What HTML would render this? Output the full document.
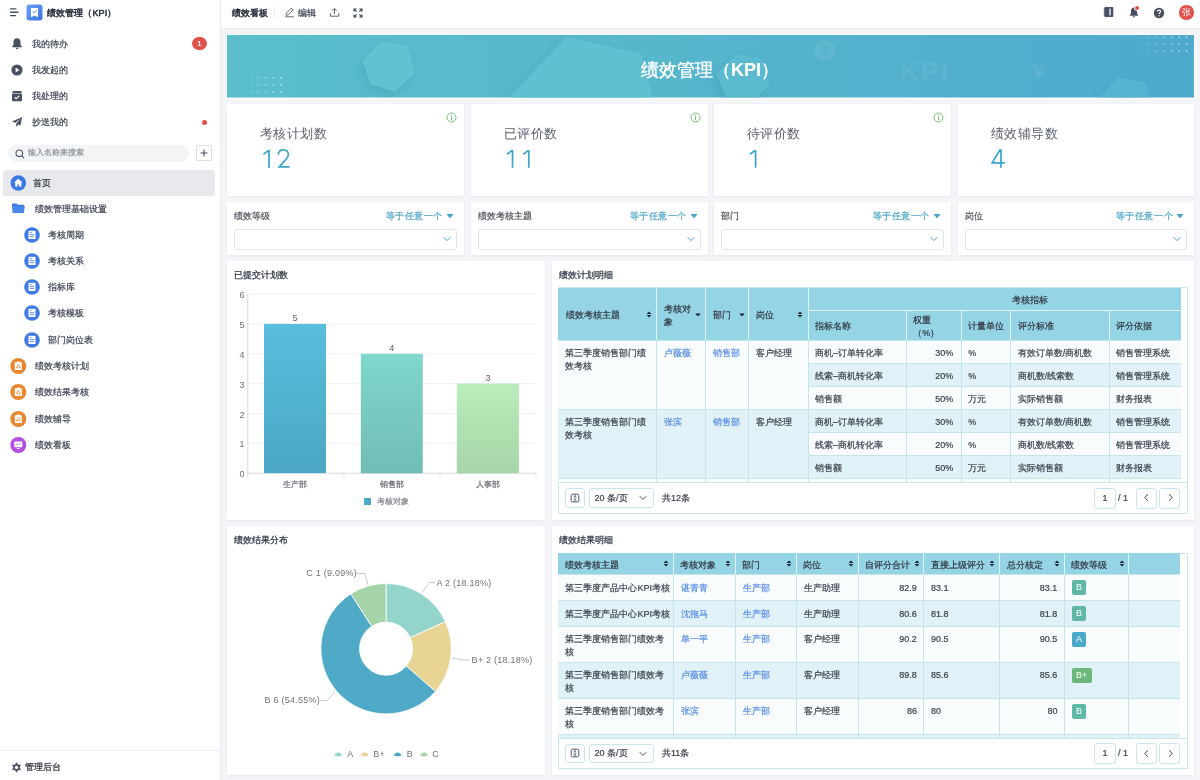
<!DOCTYPE html><html><head><meta charset="utf-8"><title>绩效看板</title><style>
*{box-sizing:border-box;margin:0;padding:0}
html,body{width:1200px;height:780px;overflow:hidden;background:#f3f5f8;font-family:"Liberation Sans",sans-serif;color:#323a46}
#wrap{position:absolute;left:0;top:0;width:1200px;height:780px;will-change:transform;-webkit-text-stroke-width:.2px}
.a{position:absolute}
.nw{white-space:nowrap}
.side{left:0;top:0;width:221px;height:780px;background:#fff;border-right:1px solid #e7e9ec}
.mi{position:absolute;font-size:9px;line-height:12px;color:#3a4150;white-space:nowrap}
.top{left:221px;top:0;width:979px;height:28.5px;background:#fff;border-bottom:1px solid #eceef1}
.card{position:absolute;background:#fff;border-radius:1px;box-shadow:0 1px 3px rgba(30,40,70,.06)}
.stat-l{position:absolute;font-size:13px;line-height:14px;color:#5b606b;letter-spacing:.6px;white-space:nowrap;-webkit-text-stroke-width:0}
.stat-n{position:absolute;font-size:27px;line-height:28px;color:#5cb1d2;white-space:nowrap;-webkit-text-stroke-width:0}
.flab{position:absolute;font-size:9px;line-height:12px;color:#4b505a;white-space:nowrap}
.fop{position:absolute;font-size:9px;line-height:12px;color:#4aa4c9;letter-spacing:.6px;white-space:nowrap}
.finp{position:absolute;height:21px;border:1px solid #e1e4e8;border-radius:3px;background:#fff}
.ctitle{position:absolute;font-size:9px;line-height:12px;color:#3d4350;white-space:nowrap}
table{border-collapse:collapse;table-layout:fixed}
.tb{position:absolute;font-size:9px;color:#3b414c}
.tb th{background:#94d4e5;font-weight:400;color:#2f3540;text-align:left;border:1px solid #dff1f6;padding:0 7px;line-height:13px;position:relative}
.tb td{border:1px solid #c3e3ed;padding:5px 7px;line-height:13px;vertical-align:top}
.tb tr.o td{background:#f9fcfd}
.tb tr.e td{background:#e0f1f7}
.lk{color:#5a8de6}
.r{text-align:right}
.btn{position:absolute;border:1px solid #c9e6ef;border-radius:3px;background:#fff}
.badge{display:inline-block;height:15px;line-height:15px;padding:0 4px;border-radius:2px;color:#fff;font-size:9px;min-width:14.5px;text-align:center}
</style></head><body><div id="wrap">
<div class="a side">
<svg class="a" style="left:9px;top:7px" width="12" height="11" viewBox="0 0 12 11"><rect x="1" y="1.2" width="6.5" height="1.3" rx=".6" fill="#4a5061"/><rect x="1" y="4.6" width="8.6" height="1.3" rx=".6" fill="#4a5061"/><rect x="1" y="8" width="6.1" height="1.3" rx=".6" fill="#4a5061"/></svg>
<svg class="a" style="left:26px;top:4px" width="17" height="17" viewBox="0 0 17 17"><defs><linearGradient id="ag" x1="0" y1="0" x2="1" y2="1"><stop offset="0" stop-color="#6ea0f7"/><stop offset="1" stop-color="#3b73e4"/></linearGradient></defs><rect x=".5" y=".5" width="16" height="16" rx="3" fill="url(#ag)"/><path d="M5 4h7v9.2l-3.5-1.8L5 13.2z" fill="#fff"/><path d="M6.6 7.4l1.5 1.4 2.6-2.4" stroke="#5b8ff2" stroke-width="1" fill="none"/></svg>
<div class="mi" style="left:47px;top:6.5px;font-size:9px;color:#2d3340;letter-spacing:.1px;-webkit-text-stroke:.5px #2d3340">绩效管理（KPI）</div>
<div class="mi" style="left:32px;top:38px">我的待办</div>
<div class="mi" style="left:32px;top:64px">我发起的</div>
<div class="mi" style="left:32px;top:90px">我处理的</div>
<div class="mi" style="left:32px;top:116px">抄送我的</div>
<svg class="a" style="left:11px;top:37px" width="12" height="13" viewBox="0 0 12 13"><path d="M6 1.2c-2.2 0-3.5 1.7-3.5 3.7v2.8L1.2 9.6v.6h9.6v-.6L9.5 7.7V4.9C9.5 2.9 8.2 1.2 6 1.2z" fill="#4a5061"/><path d="M4.6 10.8h2.8a1.4 1.4 0 0 1-2.8 0z" fill="#4a5061"/></svg>
<svg class="a" style="left:11px;top:64px" width="12" height="12" viewBox="0 0 12 12"><circle cx="6" cy="6" r="5.6" fill="#4a5061"/><path d="M4.6 3.6l3.7 2.4-3.7 2.4z" fill="#fff"/></svg>
<svg class="a" style="left:11px;top:90px" width="12" height="12" viewBox="0 0 12 12"><rect x="1.5" y="1" width="9" height="2" rx=".5" fill="#4a5061"/><rect x="1" y="3.6" width="10" height="7.6" rx="1" fill="#4a5061"/><path d="M3.8 7.2l1.5 1.4 2.9-2.7" stroke="#fff" stroke-width="1.2" fill="none"/></svg>
<svg class="a" style="left:11px;top:116px" width="12" height="12" viewBox="0 0 12 12"><path d="M11.2 1L1 5.6l3.3 1.2L10 2.6 5.2 7.5 5.3 11l1.9-2.6 2.2 1z" fill="#4a5061"/></svg>
<div class="a" style="left:192px;top:37px;width:15px;height:13px;border-radius:7px;background:#e0514b;color:#fff;font-size:8px;line-height:13px;text-align:center">1</div>
<div class="a" style="left:202px;top:120px;width:5px;height:5px;border-radius:3px;background:#e0514b"></div>
<div class="a" style="left:8px;top:145px;width:181px;height:17px;border-radius:9px;background:#f3f4f6"></div>
<svg class="a" style="left:15px;top:149px" width="10" height="10" viewBox="0 0 10 10"><circle cx="4.3" cy="4.3" r="3.3" stroke="#50576a" stroke-width="1.1" fill="none"/><path d="M6.8 6.8l2.2 2.2" stroke="#50576a" stroke-width="1.1"/></svg>
<div class="mi" style="left:28px;top:147px;font-size:8px;color:#8d929b">输入名称来搜索</div>
<div class="a" style="left:196px;top:145px;width:16px;height:16px;border:1px solid #dcdfe4;border-radius:2px;background:#fff"></div>
<svg class="a" style="left:198px;top:147px" width="12" height="12" viewBox="0 0 12 12"><path d="M6 2.5v7M2.5 6h7" stroke="#4a5061" stroke-width="1.1"/></svg>
<div class="a" style="left:3px;top:170px;width:212px;height:26px;border-radius:3px;background:#e8e9ed"></div>
<svg class="a" style="left:10px;top:175px" width="17" height="17" viewBox="0 0 17 17"><circle cx="8.3" cy="8" r="7.8" fill="#3b78e7"/><path d="M8.3 3.8L4 7.6h1.3v4.2h2.1V9.4h1.8v2.4h2.1V7.6h1.3z" fill="#fff"/></svg>
<div class="mi" style="left:33px;top:177px;color:#2d3340">首页</div>
<svg class="a" style="left:11px;top:202px" width="15" height="12" viewBox="0 0 15 12"><path d="M1 1.5h4.5l1.3 1.3H13v1.5H1z" fill="#3f7be8"/><path d="M1 4h12.8l-.9 7H1.6z" fill="#4a86ef"/></svg>
<div class="mi" style="left:35px;top:203px">绩效管理基础设置</div>
<svg class="a" style="left:23.5px;top:227px" width="16" height="16" viewBox="0 0 16 16"><circle cx="8" cy="8" r="7.8" fill="#3d7ae6"/><rect x="4.5" y="3.8" width="7" height="8.2" fill="#fff"/><path d="M5.8 5.6h1.8M5.8 7.6h4.4M5.8 9.6h4.4" stroke="#3d7ae6" stroke-width=".8"/></svg>
<div class="mi" style="left:48px;top:229px">考核周期</div>
<svg class="a" style="left:23.5px;top:253px" width="16" height="16" viewBox="0 0 16 16"><circle cx="8" cy="8" r="7.8" fill="#3d7ae6"/><rect x="4.5" y="3.8" width="7" height="8.2" fill="#fff"/><path d="M5.8 5.6h1.8M5.8 7.6h4.4M5.8 9.6h4.4" stroke="#3d7ae6" stroke-width=".8"/></svg>
<div class="mi" style="left:48px;top:255px">考核关系</div>
<svg class="a" style="left:23.5px;top:279px" width="16" height="16" viewBox="0 0 16 16"><circle cx="8" cy="8" r="7.8" fill="#3d7ae6"/><rect x="4.5" y="3.8" width="7" height="8.2" fill="#fff"/><path d="M5.8 5.6h1.8M5.8 7.6h4.4M5.8 9.6h4.4" stroke="#3d7ae6" stroke-width=".8"/></svg>
<div class="mi" style="left:48px;top:281px">指标库</div>
<svg class="a" style="left:23.5px;top:305px" width="16" height="16" viewBox="0 0 16 16"><circle cx="8" cy="8" r="7.8" fill="#3d7ae6"/><rect x="4.5" y="3.8" width="7" height="8.2" fill="#fff"/><path d="M5.8 5.6h1.8M5.8 7.6h4.4M5.8 9.6h4.4" stroke="#3d7ae6" stroke-width=".8"/></svg>
<div class="mi" style="left:48px;top:307px">考核模板</div>
<svg class="a" style="left:23.5px;top:331.5px" width="16" height="16" viewBox="0 0 16 16"><circle cx="8" cy="8" r="7.8" fill="#3d7ae6"/><rect x="4.5" y="3.8" width="7" height="8.2" fill="#fff"/><path d="M5.8 5.6h1.8M5.8 7.6h4.4M5.8 9.6h4.4" stroke="#3d7ae6" stroke-width=".8"/></svg>
<div class="mi" style="left:48px;top:333.5px">部门岗位表</div>
<svg class="a" style="left:10px;top:358px" width="17" height="17" viewBox="0 0 17 17"><circle cx="8.3" cy="8" r="8" fill="#e8872f"/><rect x="4.8" y="4.2" width="7" height="7.8" rx=".6" fill="#fff"/><path d="M7 3.6h3v1.4H7z" fill="#fff"/><path d="M8.3 6.2l-2 3.6h4z" stroke="#e8872f" stroke-width=".7" fill="none"/></svg>
<div class="mi" style="left:35px;top:360px">绩效考核计划</div>
<svg class="a" style="left:10px;top:384px" width="17" height="17" viewBox="0 0 17 17"><circle cx="8.3" cy="8" r="8" fill="#e8872f"/><rect x="4.8" y="4.2" width="7" height="7.8" rx=".6" fill="#fff"/><path d="M7 3.6h3v1.4H7z" fill="#fff"/><path d="M8.3 6.2l-2 3.6h4z" stroke="#e8872f" stroke-width=".7" fill="none"/></svg>
<div class="mi" style="left:35px;top:386px">绩效结果考核</div>
<svg class="a" style="left:10px;top:410.5px" width="17" height="17" viewBox="0 0 17 17"><circle cx="8.3" cy="8" r="8" fill="#e8872f"/><rect x="4.8" y="4.2" width="7" height="7.8" rx=".6" fill="#fff"/><path d="M7 3.6h3v1.4H7z" fill="#fff"/><path d="M8.3 6.2l-2 3.6h4z" stroke="#e8872f" stroke-width=".7" fill="none"/></svg>
<div class="mi" style="left:35px;top:412.5px">绩效辅导</div>
<svg class="a" style="left:10px;top:436.5px" width="17" height="17" viewBox="0 0 17 17"><circle cx="8.3" cy="8" r="8" fill="#b24fe0"/><rect x="4.3" y="4.6" width="8" height="5.6" rx=".6" fill="#fff"/><path d="M6.8 11.6h3" stroke="#fff" stroke-width="1"/><path d="M5.4 8.6l1.7-1.6 1.3 1 2.3-2" stroke="#b24fe0" stroke-width=".7" fill="none"/></svg>
<div class="mi" style="left:35px;top:438.5px">绩效看板</div>
<div class="a" style="left:0;top:750px;width:220px;height:1px;background:#f0f1f3"></div>
<svg class="a" style="left:10.5px;top:761.5px" width="11" height="11" viewBox="0 0 11 11"><path d="M5.5 .6L9.6 7.8H1.4z M5.5 10.2L1.4 3H9.6z" fill="#4a5061" stroke="#4a5061" stroke-width=".6" stroke-linejoin="round"/><circle cx="5.5" cy="5.4" r="1.6" fill="#fff"/></svg>
<div class="mi" style="left:24.5px;top:760.5px;color:#2d3340;-webkit-text-stroke:.25px #2d3340;letter-spacing:.2px">管理后台</div>
</div>
<div class="a top">
</div>
<div class="mi" style="left:231.5px;top:6.5px;color:#2d3340;-webkit-text-stroke:.5px #2d3340">绩效看板</div>
<div class="a" style="left:274px;top:6px;width:1px;height:13px;background:#eceef1"></div>
<svg class="a" style="left:284px;top:7px" width="11" height="11" viewBox="0 0 11 11"><path d="M2 8.2l.4-2.1L7.3 1.2l1.8 1.8-4.9 4.9z" stroke="#50576a" stroke-width=".9" fill="none"/><path d="M1.2 9.8h8.6" stroke="#50576a" stroke-width=".9"/></svg>
<div class="mi" style="left:298px;top:6.5px;color:#3a4150;-webkit-text-stroke:.2px #3a4150">编辑</div>
<svg class="a" style="left:329px;top:7px" width="11" height="11" viewBox="0 0 11 11"><path d="M5.5 7V1.6M3.3 3.6l2.2-2.1 2.2 2.1" stroke="#50576a" stroke-width=".9" fill="none"/><path d="M1.3 6.3v2.9h8.4V6.3" stroke="#50576a" stroke-width=".9" fill="none"/></svg>
<svg class="a" style="left:353px;top:7.5px" width="10" height="10" viewBox="0 0 10 10"><path d="M1 3.6V1h2.6M6.4 1H9v2.6M9 6.4V9H6.4M3.6 9H1V6.4M1.3 1.3l2.4 2.4M8.7 1.3L6.3 3.7M8.7 8.7L6.3 6.3M1.3 8.7l2.4-2.4" stroke="#3f4656" stroke-width="1.1" fill="none"/></svg>
<svg class="a" style="left:1103px;top:6px" width="11" height="12" viewBox="0 0 11 12"><rect x="1.3" y="1" width="9" height="10" rx="1.2" fill="#4a5061"/><rect x="6.2" y="2.6" width="1.6" height="6.8" fill="#d9dce2"/><path d="M.6 3h1.4M.6 5h1.4M.6 7h1.4M.6 9h1.4" stroke="#4a5061" stroke-width=".7"/></svg>
<svg class="a" style="left:1129px;top:6px" width="10" height="12" viewBox="0 0 10 12"><path d="M5 1.4c-1.9 0-3 1.5-3 3.3v2.6L.9 9.2v.5h8.2v-.5L8 7.3V4.7c0-1.8-1.1-3.3-3-3.3z" fill="#4a5061"/><path d="M3.8 10.2h2.4a1.2 1.2 0 0 1-2.4 0z" fill="#4a5061"/></svg>
<div class="a" style="left:1134px;top:4.5px;width:6px;height:6px;border-radius:3px;background:#e0514b;border:.5px solid #fff"></div>
<svg class="a" style="left:1153px;top:6.5px" width="12" height="12" viewBox="0 0 12 12"><circle cx="6" cy="6" r="5.2" fill="#4a5061"/><path d="M4.4 4.6c0-.9.7-1.5 1.6-1.5s1.6.6 1.6 1.4c0 1.2-1.5 1.2-1.5 2.4" stroke="#fff" stroke-width="1.1" fill="none"/><circle cx="6.1" cy="8.7" r=".65" fill="#fff"/></svg>
<div class="a" style="left:1179px;top:5px;width:14.5px;height:14.5px;border-radius:50%;background:#e0514b;color:#fff;font-size:9px;line-height:14.5px;text-align:center;-webkit-text-stroke-width:0">张</div>
<div class="a" style="left:226px;top:34px;width:969px;height:64.5px;background:#fff;border-radius:2px"></div>
<svg class="a" style="left:227px;top:35px" width="967" height="62.5" viewBox="0 0 967 62.5">
<defs><linearGradient id="bg1" x1="0" y1="0" x2="1" y2="0"><stop offset="0" stop-color="#5bbecb"/><stop offset=".45" stop-color="#56b6cc"/><stop offset="1" stop-color="#4eaacd"/></linearGradient><filter id="sh" x="-50%" y="-50%" width="200%" height="200%"><feGaussianBlur stdDeviation="6"/></filter></defs>
<rect width="967" height="62.5" fill="url(#bg1)"/>
<polygon points="150.7,12.3 176.5,18.2 183.2,44.0 164.0,62.3 139.0,54.8 132.3,31.5" fill="#2f7f9a" opacity=".22" filter="url(#sh)"/>
<polygon points="335.3,8.5 410.3,25.3 421.5,68.5 282.0,68.5 282.0,64.5" fill="#2f7f9a" opacity=".22" filter="url(#sh)"/>
<polygon points="507.0,26.0 531.0,31.0 538.0,55.0 526.0,68.5 496.0,68.5 485.5,45.0" fill="#2f7f9a" opacity=".22" filter="url(#sh)"/>
<polygon points="887.0,49.0 914.0,54.0 918.0,68.5 869.0,68.5" fill="#2f7f9a" opacity=".22" filter="url(#sh)"/>
<polygon points="154.7,6.3 180.5,12.2 187.2,38.0 168.0,56.3 143.0,48.8 136.3,25.5" fill="#62c3d0" stroke="#fff" stroke-opacity=".07" stroke-width="1"/>
<polygon points="339.3,2.5 414.3,19.3 425.5,62.5 286.0,62.5 286.0,58.5" fill="#5fc0d0" stroke="#fff" stroke-opacity=".07" stroke-width="1"/>
<polygon points="511.0,20.0 535.0,25.0 542.0,49.0 530.0,62.5 500.0,62.5 489.5,39.0" fill="#5bbad0" stroke="#fff" stroke-opacity=".07" stroke-width="1"/>
<polygon points="891.0,43.0 918.0,48.0 922.0,62.5 873.0,62.5" fill="#56b4d1" stroke="#fff" stroke-opacity=".07" stroke-width="1"/>
<rect x="8.1" y="42.0" width="1.5" height="1.5" fill="#fff" opacity="0.12"/>
<rect x="8.1" y="49.0" width="1.5" height="1.5" fill="#fff" opacity="0.12"/>
<rect x="8.1" y="56.0" width="1.5" height="1.5" fill="#fff" opacity="0.12"/>
<rect x="15.6" y="42.0" width="1.5" height="1.5" fill="#fff" opacity="0.20"/>
<rect x="15.6" y="49.0" width="1.5" height="1.5" fill="#fff" opacity="0.20"/>
<rect x="15.6" y="56.0" width="1.5" height="1.5" fill="#fff" opacity="0.20"/>
<rect x="23.1" y="42.0" width="1.5" height="1.5" fill="#fff" opacity="0.29"/>
<rect x="23.1" y="49.0" width="1.5" height="1.5" fill="#fff" opacity="0.29"/>
<rect x="23.1" y="56.0" width="1.5" height="1.5" fill="#fff" opacity="0.29"/>
<rect x="30.6" y="42.0" width="1.5" height="1.5" fill="#fff" opacity="0.37"/>
<rect x="30.6" y="49.0" width="1.5" height="1.5" fill="#fff" opacity="0.37"/>
<rect x="30.6" y="56.0" width="1.5" height="1.5" fill="#fff" opacity="0.37"/>
<rect x="38.1" y="42.0" width="1.5" height="1.5" fill="#fff" opacity="0.45"/>
<rect x="38.1" y="49.0" width="1.5" height="1.5" fill="#fff" opacity="0.45"/>
<rect x="38.1" y="56.0" width="1.5" height="1.5" fill="#fff" opacity="0.45"/>
<rect x="45.6" y="42.0" width="1.5" height="1.5" fill="#fff" opacity="0.54"/>
<rect x="45.6" y="49.0" width="1.5" height="1.5" fill="#fff" opacity="0.54"/>
<rect x="45.6" y="56.0" width="1.5" height="1.5" fill="#fff" opacity="0.54"/>
<rect x="53.1" y="42.0" width="1.5" height="1.5" fill="#fff" opacity="0.62"/>
<rect x="53.1" y="49.0" width="1.5" height="1.5" fill="#fff" opacity="0.62"/>
<rect x="53.1" y="56.0" width="1.5" height="1.5" fill="#fff" opacity="0.62"/>
<rect x="906.3" y="1.3" width="1.5" height="1.5" fill="#fff" opacity="0.08"/>
<rect x="906.3" y="8.3" width="1.5" height="1.5" fill="#fff" opacity="0.08"/>
<rect x="906.3" y="15.3" width="1.5" height="1.5" fill="#fff" opacity="0.08"/>
<rect x="913.8" y="1.3" width="1.5" height="1.5" fill="#fff" opacity="0.17"/>
<rect x="913.8" y="8.3" width="1.5" height="1.5" fill="#fff" opacity="0.17"/>
<rect x="913.8" y="15.3" width="1.5" height="1.5" fill="#fff" opacity="0.17"/>
<rect x="921.3" y="1.3" width="1.5" height="1.5" fill="#fff" opacity="0.25"/>
<rect x="921.3" y="8.3" width="1.5" height="1.5" fill="#fff" opacity="0.25"/>
<rect x="921.3" y="15.3" width="1.5" height="1.5" fill="#fff" opacity="0.25"/>
<rect x="928.8" y="1.3" width="1.5" height="1.5" fill="#fff" opacity="0.34"/>
<rect x="928.8" y="8.3" width="1.5" height="1.5" fill="#fff" opacity="0.34"/>
<rect x="928.8" y="15.3" width="1.5" height="1.5" fill="#fff" opacity="0.34"/>
<rect x="936.3" y="1.3" width="1.5" height="1.5" fill="#fff" opacity="0.42"/>
<rect x="936.3" y="8.3" width="1.5" height="1.5" fill="#fff" opacity="0.42"/>
<rect x="936.3" y="15.3" width="1.5" height="1.5" fill="#fff" opacity="0.42"/>
<rect x="943.8" y="1.3" width="1.5" height="1.5" fill="#fff" opacity="0.51"/>
<rect x="943.8" y="8.3" width="1.5" height="1.5" fill="#fff" opacity="0.51"/>
<rect x="943.8" y="15.3" width="1.5" height="1.5" fill="#fff" opacity="0.51"/>
<rect x="951.3" y="1.3" width="1.5" height="1.5" fill="#fff" opacity="0.59"/>
<rect x="951.3" y="8.3" width="1.5" height="1.5" fill="#fff" opacity="0.59"/>
<rect x="951.3" y="15.3" width="1.5" height="1.5" fill="#fff" opacity="0.59"/>
<rect x="958.8" y="1.3" width="1.5" height="1.5" fill="#fff" opacity="0.68"/>
<rect x="958.8" y="8.3" width="1.5" height="1.5" fill="#fff" opacity="0.68"/>
<rect x="958.8" y="15.3" width="1.5" height="1.5" fill="#fff" opacity="0.68"/>
<text x="673.0" y="45.0" font-size="26" fill="#fff" opacity=".06" font-family="Liberation Sans" font-weight="700" letter-spacing="2.5">KPI</text>
<text x="807.0" y="42.5" font-size="18" fill="#fff" opacity=".1" font-family="Liberation Sans">¥</text>
<circle cx="598.0" cy="15.5" r="10.4" fill="#fff" opacity=".07"/>
<text x="598.0" y="21.0" font-size="15" fill="#4fb0cd" opacity=".5" text-anchor="middle" font-family="Liberation Sans" font-weight="700">$</text>
</svg>
<div class="a nw" style="left:641px;top:58.5px;font-size:18px;line-height:22px;color:#fff;-webkit-text-stroke:.4px #fff">绩效管理（<b style="font-weight:700;-webkit-text-stroke-width:.1px">KPI</b>）</div>
<div class="card" style="left:227px;top:104px;width:237px;height:92px"></div>
<div class="stat-l" style="left:259.5px;top:127px">考核计划数</div>
<svg class="a" style="left:445.5px;top:111.5px" width="11" height="11" viewBox="0 0 11 11"><circle cx="5.5" cy="5.5" r="4.5" stroke="#70c075" stroke-width="1" fill="none"/><circle cx="5.5" cy="3.4" r=".7" fill="#70c075"/><path d="M5.5 4.8v3.3" stroke="#70c075" stroke-width="1"/></svg>
<div class="card" style="left:471px;top:104px;width:237px;height:92px"></div>
<div class="stat-l" style="left:503.5px;top:127px">已评价数</div>
<svg class="a" style="left:689.5px;top:111.5px" width="11" height="11" viewBox="0 0 11 11"><circle cx="5.5" cy="5.5" r="4.5" stroke="#70c075" stroke-width="1" fill="none"/><circle cx="5.5" cy="3.4" r=".7" fill="#70c075"/><path d="M5.5 4.8v3.3" stroke="#70c075" stroke-width="1"/></svg>
<div class="card" style="left:714px;top:104px;width:237px;height:92px"></div>
<div class="stat-l" style="left:746.5px;top:127px">待评价数</div>
<svg class="a" style="left:932.5px;top:111.5px" width="11" height="11" viewBox="0 0 11 11"><circle cx="5.5" cy="5.5" r="4.5" stroke="#70c075" stroke-width="1" fill="none"/><circle cx="5.5" cy="3.4" r=".7" fill="#70c075"/><path d="M5.5 4.8v3.3" stroke="#70c075" stroke-width="1"/></svg>
<div class="card" style="left:958px;top:104px;width:236.20000000000005px;height:92px"></div>
<div class="stat-l" style="left:990.5px;top:127px">绩效辅导数</div>
<svg class="a" style="left:0;top:0" width="1200" height="200" viewBox="0 0 1200 200"><path d="M263.40 154.3L268.70 150.4M269.00 150.1V167.7M278.30 154.8C278.30 151.7 280.50 149.9 283.40 149.9C286.30 149.9 288.40 151.9 288.40 154.6C288.40 156.6 287.30 158.0 285.70 159.6L279.30 166.8H289.60M506.95 154.3L512.25 150.4M512.55 150.1V167.7M523.20 154.3L528.50 150.4M528.80 150.1V167.7M750.00 154.3L755.30 150.4M755.60 150.1V167.7M1001.00 167.7V150.1H999.80L992.20 162.9H1004.80" stroke="#3ea4ca" stroke-width="1.75" fill="none" stroke-linejoin="miter"/></svg>
<div class="card" style="left:227px;top:202px;width:237px;height:53px"></div>
<div class="flab" style="left:234px;top:209.5px">绩效等级</div>
<div class="fop" style="left:385.5px;top:209.5px">等于任意一个</div>
<svg class="a" style="left:445.5px;top:213px" width="8" height="6" viewBox="0 0 8 6"><path d="M.5 1h7L4 5.4z" fill="#4aa4c9"/></svg>
<div class="finp" style="left:234px;top:228.5px;width:223px"></div>
<svg class="a" style="left:443px;top:236px" width="8" height="6" viewBox="0 0 8 6"><path d="M.6 1.2L4 4.6 7.4 1.2" stroke="#4aa4c9" stroke-width="1" fill="none"/></svg>
<div class="card" style="left:471px;top:202px;width:237px;height:53px"></div>
<div class="flab" style="left:478px;top:209.5px">绩效考核主题</div>
<div class="fop" style="left:629.5px;top:209.5px">等于任意一个</div>
<svg class="a" style="left:689.5px;top:213px" width="8" height="6" viewBox="0 0 8 6"><path d="M.5 1h7L4 5.4z" fill="#4aa4c9"/></svg>
<div class="finp" style="left:478px;top:228.5px;width:223px"></div>
<svg class="a" style="left:687px;top:236px" width="8" height="6" viewBox="0 0 8 6"><path d="M.6 1.2L4 4.6 7.4 1.2" stroke="#4aa4c9" stroke-width="1" fill="none"/></svg>
<div class="card" style="left:714px;top:202px;width:237px;height:53px"></div>
<div class="flab" style="left:721px;top:209.5px">部门</div>
<div class="fop" style="left:872.5px;top:209.5px">等于任意一个</div>
<svg class="a" style="left:932.5px;top:213px" width="8" height="6" viewBox="0 0 8 6"><path d="M.5 1h7L4 5.4z" fill="#4aa4c9"/></svg>
<div class="finp" style="left:721px;top:228.5px;width:223px"></div>
<svg class="a" style="left:930px;top:236px" width="8" height="6" viewBox="0 0 8 6"><path d="M.6 1.2L4 4.6 7.4 1.2" stroke="#4aa4c9" stroke-width="1" fill="none"/></svg>
<div class="card" style="left:958px;top:202px;width:236.20000000000005px;height:53px"></div>
<div class="flab" style="left:965px;top:209.5px">岗位</div>
<div class="fop" style="left:1115.7px;top:209.5px">等于任意一个</div>
<svg class="a" style="left:1175.7px;top:213px" width="8" height="6" viewBox="0 0 8 6"><path d="M.5 1h7L4 5.4z" fill="#4aa4c9"/></svg>
<div class="finp" style="left:965px;top:228.5px;width:222.20000000000005px"></div>
<svg class="a" style="left:1173.2px;top:236px" width="8" height="6" viewBox="0 0 8 6"><path d="M.6 1.2L4 4.6 7.4 1.2" stroke="#4aa4c9" stroke-width="1" fill="none"/></svg>
<div class="card" style="left:227px;top:261px;width:318px;height:259px"></div>
<div class="ctitle" style="left:234px;top:268.5px;-webkit-text-stroke:.25px #2d3340;color:#2d3340">已提交计划数</div>
<svg class="a" style="left:227px;top:261px" width="318" height="259" viewBox="227 261 318 259"><defs><linearGradient id="b1" x1="0" y1="0" x2="0" y2="1"><stop offset="0" stop-color="#58bedc"/><stop offset="1" stop-color="#4ba7c3"/></linearGradient><linearGradient id="b2" x1="0" y1="0" x2="0" y2="1"><stop offset="0" stop-color="#80d7cc"/><stop offset="1" stop-color="#70bdb5"/></linearGradient><linearGradient id="b3" x1="0" y1="0" x2="0" y2="1"><stop offset="0" stop-color="#b9edb9"/><stop offset="1" stop-color="#a6d5a8"/></linearGradient></defs><text x="244.5" y="477.2" font-size="9" fill="#6b6f77" text-anchor="end" font-family="Liberation Sans">0</text><line x1="248" y1="443.3" x2="536" y2="443.3" stroke="#f1f2f4" stroke-width="1"/><text x="244.5" y="447.3" font-size="9" fill="#6b6f77" text-anchor="end" font-family="Liberation Sans">1</text><line x1="248" y1="413.5" x2="536" y2="413.5" stroke="#f1f2f4" stroke-width="1"/><text x="244.5" y="417.5" font-size="9" fill="#6b6f77" text-anchor="end" font-family="Liberation Sans">2</text><line x1="248" y1="383.6" x2="536" y2="383.6" stroke="#f1f2f4" stroke-width="1"/><text x="244.5" y="387.6" font-size="9" fill="#6b6f77" text-anchor="end" font-family="Liberation Sans">3</text><line x1="248" y1="353.8" x2="536" y2="353.8" stroke="#f1f2f4" stroke-width="1"/><text x="244.5" y="357.8" font-size="9" fill="#6b6f77" text-anchor="end" font-family="Liberation Sans">4</text><line x1="248" y1="323.9" x2="536" y2="323.9" stroke="#f1f2f4" stroke-width="1"/><text x="244.5" y="327.9" font-size="9" fill="#6b6f77" text-anchor="end" font-family="Liberation Sans">5</text><line x1="248" y1="294.1" x2="536" y2="294.1" stroke="#f1f2f4" stroke-width="1"/><text x="244.5" y="298.1" font-size="9" fill="#6b6f77" text-anchor="end" font-family="Liberation Sans">6</text><line x1="247.8" y1="294" x2="247.8" y2="477.2" stroke="#d4d7dc" stroke-width="1"/><line x1="247.8" y1="473.2" x2="536" y2="473.2" stroke="#d4d7dc" stroke-width="1"/><line x1="343.9" y1="473.2" x2="343.9" y2="476.2" stroke="#d4d7dc" stroke-width="1"/><line x1="440" y1="473.2" x2="440" y2="476.2" stroke="#d4d7dc" stroke-width="1"/><line x1="536" y1="473.2" x2="536" y2="476.2" stroke="#d4d7dc" stroke-width="1"/><rect x="264" y="323.9" width="62.0" height="149.2" fill="url(#b1)"/><text x="295.0" y="320.9" font-size="9" fill="#5f636b" text-anchor="middle" font-family="Liberation Sans">5</text><rect x="360.8" y="353.8" width="62.0" height="119.4" fill="url(#b2)"/><text x="391.8" y="350.8" font-size="9" fill="#5f636b" text-anchor="middle" font-family="Liberation Sans">4</text><rect x="456.8" y="383.6" width="62.1" height="89.6" fill="url(#b3)"/><text x="487.9" y="380.6" font-size="9" fill="#5f636b" text-anchor="middle" font-family="Liberation Sans">3</text></svg>
<div class="a nw" style="left:280.0px;top:480px;width:30px;text-align:center;font-size:8px;line-height:10px;color:#6b6f77">生产部</div>
<div class="a nw" style="left:376.8px;top:480px;width:30px;text-align:center;font-size:8px;line-height:10px;color:#6b6f77">销售部</div>
<div class="a nw" style="left:472.85px;top:480px;width:30px;text-align:center;font-size:8px;line-height:10px;color:#6b6f77">人事部</div>
<div class="a" style="left:364.3px;top:498.3px;width:6.7px;height:6.5px;background:#4ba8c6"></div>
<div class="a nw" style="left:377px;top:496.5px;font-size:8px;line-height:10px;color:#7a7e86">考核对象</div>
<div class="card" style="left:551.5px;top:261px;width:642.7px;height:259px"></div>
<div class="ctitle" style="left:558.5px;top:268.5px;-webkit-text-stroke:.3px #3d4350">绩效计划明细</div>
<div class="a" style="left:558px;top:287px;width:630px;height:227px;border:1px solid #c9e6ef;border-radius:1px"></div>
<div class="a" style="left:558.4px;top:288.0px;width:622.4px;height:52.5px;background:#94d4e5"></div>
<div class="a" style="left:655.8px;top:288.0px;width:1px;height:52.5px;background:#e3f3f8"></div>
<div class="a" style="left:704.8px;top:288.0px;width:1px;height:52.5px;background:#e3f3f8"></div>
<div class="a" style="left:748.2px;top:288.0px;width:1px;height:52.5px;background:#e3f3f8"></div>
<div class="a" style="left:807.5px;top:288.0px;width:1px;height:52.5px;background:#e3f3f8"></div>
<div class="a" style="left:905.8px;top:310.3px;width:1px;height:30.2px;background:#e3f3f8"></div>
<div class="a" style="left:960.8px;top:310.3px;width:1px;height:30.2px;background:#e3f3f8"></div>
<div class="a" style="left:1010.3px;top:310.3px;width:1px;height:30.2px;background:#e3f3f8"></div>
<div class="a" style="left:1108.7px;top:310.3px;width:1px;height:30.2px;background:#e3f3f8"></div>
<div class="a" style="left:808.0px;top:309.8px;width:372.8px;height:1px;background:#e3f3f8"></div>
<div class="a" style="left:565.9px;top:309.0px;white-space:nowrap;font-size:9px;line-height:13px;color:#2f3540;">绩效考核主题</div>
<svg class="a" style="left:646.4px;top:310.8px" width="6" height="7" viewBox="0 0 6 7"><path d="M.6 2.9L3 .4l2.4 2.5z M.6 4.1L3 6.6l2.4-2.5z" fill="#1f2530"/></svg>
<div class="a" style="left:663.8px;top:303.0px;width:40px;white-space:normal;font-size:9px;line-height:13px;color:#2f3540;">考核对<br>象</div>
<svg class="a" style="left:694.8px;top:312.5px" width="6" height="4" viewBox="0 0 6 4"><path d="M.3 .5h5.4L3 3.6z" fill="#1f2530"/></svg>
<div class="a" style="left:712.5px;top:309.0px;white-space:nowrap;font-size:9px;line-height:13px;color:#2f3540;">部门</div>
<svg class="a" style="left:738.5px;top:312.5px" width="6" height="4" viewBox="0 0 6 4"><path d="M.3 .5h5.4L3 3.6z" fill="#1f2530"/></svg>
<div class="a" style="left:756.0px;top:309.0px;white-space:nowrap;font-size:9px;line-height:13px;color:#2f3540;">岗位</div>
<svg class="a" style="left:797.3px;top:310.8px" width="6" height="7" viewBox="0 0 6 7"><path d="M.6 2.9L3 .4l2.4 2.5z M.6 4.1L3 6.6l2.4-2.5z" fill="#1f2530"/></svg>
<div class="a" style="left:1012.3px;top:294.0px;white-space:nowrap;font-size:9px;line-height:13px;color:#2f3540;">考核指标</div>
<div class="a" style="left:815.0px;top:320.0px;white-space:nowrap;font-size:9px;line-height:13px;color:#2f3540;">指标名称</div>
<div class="a" style="left:913.3px;top:314.0px;width:45px;white-space:normal;font-size:9px;line-height:13px;color:#2f3540;">权重<br>（%）</div>
<div class="a" style="left:968.3px;top:320.0px;white-space:nowrap;font-size:9px;line-height:13px;color:#2f3540;">计量单位</div>
<div class="a" style="left:1017.8px;top:320.0px;white-space:nowrap;font-size:9px;line-height:13px;color:#2f3540;">评分标准</div>
<div class="a" style="left:1116.2px;top:320.0px;white-space:nowrap;font-size:9px;line-height:13px;color:#2f3540;">评分依据</div>
<div class="a" style="left:558.4px;top:340.5px;width:249.6px;height:69.0px;background:#f9fcfd"></div>
<div class="a" style="left:808.0px;top:340.5px;width:372.8px;height:23.0px;background:#f9fcfd"></div>
<div class="a" style="left:815.0px;top:347.0px;white-space:nowrap;font-size:9px;line-height:13px;color:#3b414c;">商机–订单转化率</div>
<div class="a nw" style="left:753.3px;width:200px;text-align:right;top:347.0px;font-size:9px;line-height:13px;color:#3b414c;">30%</div>
<div class="a" style="left:968.3px;top:347.0px;white-space:nowrap;font-size:9px;line-height:13px;color:#3b414c;">%</div>
<div class="a" style="left:1017.8px;top:347.0px;white-space:nowrap;font-size:9px;line-height:13px;color:#3b414c;">有效订单数/商机数</div>
<div class="a" style="left:1116.2px;top:347.0px;white-space:nowrap;font-size:9px;line-height:13px;color:#3b414c;">销售管理系统</div>
<div class="a" style="left:808.0px;top:363.5px;width:372.8px;height:23.0px;background:#e0f1f7"></div>
<div class="a" style="left:815.0px;top:370.0px;white-space:nowrap;font-size:9px;line-height:13px;color:#3b414c;">线索–商机转化率</div>
<div class="a nw" style="left:753.3px;width:200px;text-align:right;top:370.0px;font-size:9px;line-height:13px;color:#3b414c;">20%</div>
<div class="a" style="left:968.3px;top:370.0px;white-space:nowrap;font-size:9px;line-height:13px;color:#3b414c;">%</div>
<div class="a" style="left:1017.8px;top:370.0px;white-space:nowrap;font-size:9px;line-height:13px;color:#3b414c;">商机数/线索数</div>
<div class="a" style="left:1116.2px;top:370.0px;white-space:nowrap;font-size:9px;line-height:13px;color:#3b414c;">销售管理系统</div>
<div class="a" style="left:808.0px;top:363.0px;width:372.8px;height:1px;background:#c6e4ee"></div>
<div class="a" style="left:808.0px;top:386.5px;width:372.8px;height:23.0px;background:#f9fcfd"></div>
<div class="a" style="left:815.0px;top:393.0px;white-space:nowrap;font-size:9px;line-height:13px;color:#3b414c;">销售额</div>
<div class="a nw" style="left:753.3px;width:200px;text-align:right;top:393.0px;font-size:9px;line-height:13px;color:#3b414c;">50%</div>
<div class="a" style="left:968.3px;top:393.0px;white-space:nowrap;font-size:9px;line-height:13px;color:#3b414c;">万元</div>
<div class="a" style="left:1017.8px;top:393.0px;white-space:nowrap;font-size:9px;line-height:13px;color:#3b414c;">实际销售额</div>
<div class="a" style="left:1116.2px;top:393.0px;white-space:nowrap;font-size:9px;line-height:13px;color:#3b414c;">财务报表</div>
<div class="a" style="left:808.0px;top:386.0px;width:372.8px;height:1px;background:#c6e4ee"></div>
<div class="a" style="left:565.4px;top:347.0px;width:85px;white-space:normal;font-size:9px;line-height:13px;color:#3b414c;">第三季度销售部门绩<br>效考核</div>
<div class="a" style="left:663.5px;top:347.0px;white-space:nowrap;font-size:9px;line-height:13px;color:#5a8de6;">卢薇薇</div>
<div class="a" style="left:712.5px;top:347.0px;white-space:nowrap;font-size:9px;line-height:13px;color:#5a8de6;">销售部</div>
<div class="a" style="left:756.0px;top:347.0px;white-space:nowrap;font-size:9px;line-height:13px;color:#3b414c;">客户经理</div>
<div class="a" style="left:558.4px;top:409.5px;width:249.6px;height:69.0px;background:#e0f1f7"></div>
<div class="a" style="left:808.0px;top:409.5px;width:372.8px;height:23.0px;background:#e0f1f7"></div>
<div class="a" style="left:815.0px;top:416.0px;white-space:nowrap;font-size:9px;line-height:13px;color:#3b414c;">商机–订单转化率</div>
<div class="a nw" style="left:753.3px;width:200px;text-align:right;top:416.0px;font-size:9px;line-height:13px;color:#3b414c;">30%</div>
<div class="a" style="left:968.3px;top:416.0px;white-space:nowrap;font-size:9px;line-height:13px;color:#3b414c;">%</div>
<div class="a" style="left:1017.8px;top:416.0px;white-space:nowrap;font-size:9px;line-height:13px;color:#3b414c;">有效订单数/商机数</div>
<div class="a" style="left:1116.2px;top:416.0px;white-space:nowrap;font-size:9px;line-height:13px;color:#3b414c;">销售管理系统</div>
<div class="a" style="left:808.0px;top:432.5px;width:372.8px;height:23.0px;background:#f9fcfd"></div>
<div class="a" style="left:815.0px;top:439.0px;white-space:nowrap;font-size:9px;line-height:13px;color:#3b414c;">线索–商机转化率</div>
<div class="a nw" style="left:753.3px;width:200px;text-align:right;top:439.0px;font-size:9px;line-height:13px;color:#3b414c;">20%</div>
<div class="a" style="left:968.3px;top:439.0px;white-space:nowrap;font-size:9px;line-height:13px;color:#3b414c;">%</div>
<div class="a" style="left:1017.8px;top:439.0px;white-space:nowrap;font-size:9px;line-height:13px;color:#3b414c;">商机数/线索数</div>
<div class="a" style="left:1116.2px;top:439.0px;white-space:nowrap;font-size:9px;line-height:13px;color:#3b414c;">销售管理系统</div>
<div class="a" style="left:808.0px;top:432.0px;width:372.8px;height:1px;background:#c6e4ee"></div>
<div class="a" style="left:808.0px;top:455.5px;width:372.8px;height:23.0px;background:#e0f1f7"></div>
<div class="a" style="left:815.0px;top:462.0px;white-space:nowrap;font-size:9px;line-height:13px;color:#3b414c;">销售额</div>
<div class="a nw" style="left:753.3px;width:200px;text-align:right;top:462.0px;font-size:9px;line-height:13px;color:#3b414c;">50%</div>
<div class="a" style="left:968.3px;top:462.0px;white-space:nowrap;font-size:9px;line-height:13px;color:#3b414c;">万元</div>
<div class="a" style="left:1017.8px;top:462.0px;white-space:nowrap;font-size:9px;line-height:13px;color:#3b414c;">实际销售额</div>
<div class="a" style="left:1116.2px;top:462.0px;white-space:nowrap;font-size:9px;line-height:13px;color:#3b414c;">财务报表</div>
<div class="a" style="left:808.0px;top:455.0px;width:372.8px;height:1px;background:#c6e4ee"></div>
<div class="a" style="left:565.4px;top:416.0px;width:85px;white-space:normal;font-size:9px;line-height:13px;color:#3b414c;">第三季度销售部门绩<br>效考核</div>
<div class="a" style="left:663.5px;top:416.0px;white-space:nowrap;font-size:9px;line-height:13px;color:#5a8de6;">张滨</div>
<div class="a" style="left:712.5px;top:416.0px;white-space:nowrap;font-size:9px;line-height:13px;color:#5a8de6;">销售部</div>
<div class="a" style="left:756.0px;top:416.0px;white-space:nowrap;font-size:9px;line-height:13px;color:#3b414c;">客户经理</div>
<div class="a" style="left:558.4px;top:478.5px;width:622.4px;height:4.1px;background:#f9fcfd"></div>
<div class="a" style="left:558.4px;top:340.0px;width:622.4px;height:1px;background:#c6e4ee"></div>
<div class="a" style="left:558.4px;top:409.0px;width:622.4px;height:1px;background:#c6e4ee"></div>
<div class="a" style="left:558.4px;top:478.0px;width:622.4px;height:1px;background:#c6e4ee"></div>
<div class="a" style="left:655.8px;top:340.5px;width:1px;height:142.1px;background:#c6e4ee"></div>
<div class="a" style="left:704.8px;top:340.5px;width:1px;height:142.1px;background:#c6e4ee"></div>
<div class="a" style="left:748.2px;top:340.5px;width:1px;height:142.1px;background:#c6e4ee"></div>
<div class="a" style="left:807.5px;top:340.5px;width:1px;height:142.1px;background:#c6e4ee"></div>
<div class="a" style="left:905.8px;top:340.5px;width:1px;height:142.1px;background:#c6e4ee"></div>
<div class="a" style="left:960.8px;top:340.5px;width:1px;height:142.1px;background:#c6e4ee"></div>
<div class="a" style="left:1010.3px;top:340.5px;width:1px;height:142.1px;background:#c6e4ee"></div>
<div class="a" style="left:1108.7px;top:340.5px;width:1px;height:142.1px;background:#c6e4ee"></div>
<div class="a" style="left:558.0px;top:482.3px;width:629.5px;height:1px;background:#c9e6ef"></div>
<div class="btn" style="left:565.3px;top:488.4px;width:19.5px;height:19.3px"></div>
<svg class="a" style="left:570px;top:493.0px" width="10" height="10" viewBox="0 0 10 10"><rect x="1.2" y="1.2" width="7.6" height="7.6" rx="1.4" stroke="#4a5061" stroke-width="1" fill="none"/><path d="M5 2.6v4.8M3.6 3.8L5 2.6l1.4 1.2M3.6 6.2L5 7.4l1.4-1.2" stroke="#4a5061" stroke-width=".8" fill="none"/></svg>
<div class="btn" style="left:588.5px;top:488.4px;width:65px;height:19.3px"></div>
<div class="a" style="left:594.5px;top:491.7px;white-space:nowrap;font-size:9px;line-height:13px;color:#3b414c;">20 条/页</div>
<svg class="a" style="left:639px;top:495.4px" width="8" height="6" viewBox="0 0 8 6"><path d="M.8 1.2L4 4.4 7.2 1.2" stroke="#4a5061" stroke-width="1" fill="none"/></svg>
<div class="a" style="left:662.0px;top:491.7px;white-space:nowrap;font-size:9px;line-height:13px;color:#3b414c;">共12条</div>
<div class="btn" style="left:1094px;top:487.6px;width:21.7px;height:21px"></div>
<div class="a" style="left:1105.0px;top:491.7px;white-space:nowrap;font-size:9px;line-height:13px;color:#3b414c;transform:translateX(-2.5px)">1</div>
<div class="a" style="left:1118.0px;top:491.7px;white-space:nowrap;font-size:9px;line-height:13px;color:#3b414c;">/ 1</div>
<div class="btn" style="left:1135.8px;top:487.6px;width:21px;height:21px"></div>
<div class="btn" style="left:1159.2px;top:487.6px;width:21px;height:21px"></div>
<svg class="a" style="left:1142px;top:493.4px" width="9" height="9" viewBox="0 0 9 9"><path d="M5.8 1.2L2.8 4.5l3 3.3" stroke="#3b414c" stroke-width="1" fill="none"/></svg>
<svg class="a" style="left:1165.5px;top:493.4px" width="9" height="9" viewBox="0 0 9 9"><path d="M3.2 1.2l3 3.3-3 3.3" stroke="#3b414c" stroke-width="1" fill="none"/></svg>
<div class="card" style="left:227px;top:526px;width:318px;height:249px"></div>
<div class="ctitle" style="left:234px;top:533.5px;-webkit-text-stroke:.25px #2d3340;color:#2d3340">绩效结果分布</div>
<svg class="a" style="left:227px;top:526px" width="318" height="248" viewBox="227 526 318 248"><path d="M386.10 583.50A65.2 65.2 0 0 1 445.41 621.61L410.30 637.65A26.6 26.6 0 0 0 386.10 622.10z" fill="#93d4cb" stroke="#fff" stroke-width=".8"/><path d="M445.41 621.61A65.2 65.2 0 0 1 435.38 691.39L406.21 666.12A26.6 26.6 0 0 0 410.30 637.65z" fill="#e8d596" stroke="#fff" stroke-width=".8"/><path d="M435.38 691.39A65.2 65.2 0 1 1 350.85 593.85L371.72 626.32A26.6 26.6 0 1 0 406.21 666.12z" fill="#4eaac6" stroke="#fff" stroke-width=".8"/><path d="M350.85 593.85A65.2 65.2 0 0 1 386.10 583.50L386.10 622.10A26.6 26.6 0 0 0 371.72 626.32z" fill="#a4d4a8" stroke="#fff" stroke-width=".8"/><polyline points="357,573.5 365,573.5 368,585" stroke="#b9bcc2" stroke-width=".8" fill="none"/><polyline points="422,592.5 429.5,582.5 435,582.5" stroke="#b9bcc2" stroke-width=".8" fill="none"/><polyline points="452,658 463,660 470,660" stroke="#b9bcc2" stroke-width=".8" fill="none"/><polyline points="335,692 327,700.5 320,700.5" stroke="#b9bcc2" stroke-width=".8" fill="none"/><path d="M334.4 755.6C335.4 751.6 341.0 751.6 342.0 755.6C340.6 756.5 335.8 756.5 334.4 755.6z" fill="#93d4cb"/><path d="M360.8 755.6C361.8 751.6 367.4 751.6 368.4 755.6C367.0 756.5 362.2 756.5 360.8 755.6z" fill="#e8d596"/><path d="M393.8 755.6C394.8 751.6 400.4 751.6 401.4 755.6C400.0 756.5 395.2 756.5 393.8 755.6z" fill="#4eaac6"/><path d="M420.3 755.6C421.3 751.6 426.9 751.6 427.9 755.6C426.5 756.5 421.7 756.5 420.3 755.6z" fill="#a4d4a8"/></svg>
<div class="a" style="left:306.2px;top:568.0px;white-space:nowrap;font-size:9px;line-height:11px;color:#6e727a;-webkit-text-stroke-width:0;letter-spacing:.25px">C 1 (9.09%)</div>
<div class="a" style="left:436.4px;top:577.5px;white-space:nowrap;font-size:9px;line-height:11px;color:#6e727a;-webkit-text-stroke-width:0;letter-spacing:.25px">A 2 (18.18%)</div>
<div class="a" style="left:471.5px;top:654.5px;white-space:nowrap;font-size:9px;line-height:11px;color:#6e727a;-webkit-text-stroke-width:0;letter-spacing:.25px">B+ 2 (18.18%)</div>
<div class="a" style="left:264.6px;top:695.0px;white-space:nowrap;font-size:9px;line-height:11px;color:#6e727a;-webkit-text-stroke-width:0;letter-spacing:.25px">B 6 (54.55%)</div>
<div class="a" style="left:347.2px;top:748.5px;white-space:nowrap;font-size:9px;line-height:11px;color:#6e727a;-webkit-text-stroke-width:0;letter-spacing:.25px">A</div>
<div class="a" style="left:373.3px;top:748.5px;white-space:nowrap;font-size:9px;line-height:11px;color:#6e727a;-webkit-text-stroke-width:0;letter-spacing:.25px">B+</div>
<div class="a" style="left:406.7px;top:748.5px;white-space:nowrap;font-size:9px;line-height:11px;color:#6e727a;-webkit-text-stroke-width:0;letter-spacing:.25px">B</div>
<div class="a" style="left:432.3px;top:748.5px;white-space:nowrap;font-size:9px;line-height:11px;color:#6e727a;-webkit-text-stroke-width:0;letter-spacing:.25px">C</div>
<div class="card" style="left:551.5px;top:526px;width:642.7px;height:249px"></div>
<div class="ctitle" style="left:558.5px;top:534px;-webkit-text-stroke:.3px #3d4350">绩效结果明细</div>
<div class="a" style="left:558px;top:552.5px;width:630px;height:216.5px;border:1px solid #c9e6ef;border-radius:1px"></div>
<div class="a" style="left:558.4px;top:553.0px;width:622.1px;height:21.5px;background:#94d4e5"></div>
<div class="a" style="left:672.7px;top:553.0px;width:1px;height:21.5px;background:#e3f3f8"></div>
<div class="a" style="left:734.9px;top:553.0px;width:1px;height:21.5px;background:#e3f3f8"></div>
<div class="a" style="left:795.9px;top:553.0px;width:1px;height:21.5px;background:#e3f3f8"></div>
<div class="a" style="left:857.8px;top:553.0px;width:1px;height:21.5px;background:#e3f3f8"></div>
<div class="a" style="left:923.4px;top:553.0px;width:1px;height:21.5px;background:#e3f3f8"></div>
<div class="a" style="left:999.1px;top:553.0px;width:1px;height:21.5px;background:#e3f3f8"></div>
<div class="a" style="left:1063.9px;top:553.0px;width:1px;height:21.5px;background:#e3f3f8"></div>
<div class="a" style="left:1128.3px;top:553.0px;width:1px;height:21.5px;background:#e3f3f8"></div>
<div class="a" style="left:565.4px;top:559.0px;white-space:nowrap;font-size:9px;line-height:13px;color:#2f3540;">绩效考核主题</div>
<svg class="a" style="left:662.9px;top:560.3px" width="6" height="7" viewBox="0 0 6 7"><path d="M.6 2.9L3 .4l2.4 2.5z M.6 4.1L3 6.6l2.4-2.5z" fill="#1f2530"/></svg>
<div class="a" style="left:680.2px;top:559.0px;white-space:nowrap;font-size:9px;line-height:13px;color:#2f3540;">考核对象</div>
<svg class="a" style="left:725.1px;top:560.3px" width="6" height="7" viewBox="0 0 6 7"><path d="M.6 2.9L3 .4l2.4 2.5z M.6 4.1L3 6.6l2.4-2.5z" fill="#1f2530"/></svg>
<div class="a" style="left:742.4px;top:559.0px;white-space:nowrap;font-size:9px;line-height:13px;color:#2f3540;">部门</div>
<svg class="a" style="left:786.1px;top:560.3px" width="6" height="7" viewBox="0 0 6 7"><path d="M.6 2.9L3 .4l2.4 2.5z M.6 4.1L3 6.6l2.4-2.5z" fill="#1f2530"/></svg>
<div class="a" style="left:803.4px;top:559.0px;white-space:nowrap;font-size:9px;line-height:13px;color:#2f3540;">岗位</div>
<svg class="a" style="left:848.0px;top:560.3px" width="6" height="7" viewBox="0 0 6 7"><path d="M.6 2.9L3 .4l2.4 2.5z M.6 4.1L3 6.6l2.4-2.5z" fill="#1f2530"/></svg>
<div class="a" style="left:865.2px;top:559.0px;white-space:nowrap;font-size:9px;line-height:13px;color:#2f3540;">自评分合计</div>
<svg class="a" style="left:913.6px;top:560.3px" width="6" height="7" viewBox="0 0 6 7"><path d="M.6 2.9L3 .4l2.4 2.5z M.6 4.1L3 6.6l2.4-2.5z" fill="#1f2530"/></svg>
<div class="a" style="left:930.9px;top:559.0px;white-space:nowrap;font-size:9px;line-height:13px;color:#2f3540;">直接上级评分</div>
<svg class="a" style="left:989.3px;top:560.3px" width="6" height="7" viewBox="0 0 6 7"><path d="M.6 2.9L3 .4l2.4 2.5z M.6 4.1L3 6.6l2.4-2.5z" fill="#1f2530"/></svg>
<div class="a" style="left:1006.6px;top:559.0px;white-space:nowrap;font-size:9px;line-height:13px;color:#2f3540;">总分核定</div>
<svg class="a" style="left:1054.1px;top:560.3px" width="6" height="7" viewBox="0 0 6 7"><path d="M.6 2.9L3 .4l2.4 2.5z M.6 4.1L3 6.6l2.4-2.5z" fill="#1f2530"/></svg>
<div class="a" style="left:1071.4px;top:559.0px;white-space:nowrap;font-size:9px;line-height:13px;color:#2f3540;">绩效等级</div>
<svg class="a" style="left:1118.5px;top:560.3px" width="6" height="7" viewBox="0 0 6 7"><path d="M.6 2.9L3 .4l2.4 2.5z M.6 4.1L3 6.6l2.4-2.5z" fill="#1f2530"/></svg>
<div class="a" style="left:558.4px;top:574.5px;width:622.1px;height:25.9px;background:#f9fcfd"></div>
<div class="a" style="left:565.4px;top:582.0px;width:110px;white-space:normal;font-size:9px;line-height:13px;color:#3b414c;">第三季度产品中心KPI考核</div>
<div class="a" style="left:681.2px;top:582.0px;white-space:nowrap;font-size:9px;line-height:13px;color:#5a8de6;">谌青青</div>
<div class="a" style="left:743.4px;top:582.0px;white-space:nowrap;font-size:9px;line-height:13px;color:#5a8de6;">生产部</div>
<div class="a" style="left:804.4px;top:582.0px;white-space:nowrap;font-size:9px;line-height:13px;color:#3b414c;">生产助理</div>
<div class="a nw" style="left:716.9px;width:200px;text-align:right;top:582.0px;font-size:9px;line-height:13px;color:#3b414c;">82.9</div>
<div class="a" style="left:930.9px;top:582.0px;white-space:nowrap;font-size:9px;line-height:13px;color:#3b414c;">83.1</div>
<div class="a nw" style="left:857.4px;width:200px;text-align:right;top:582.0px;font-size:9px;line-height:13px;color:#3b414c;">83.1</div>
<div class="a" style="left:1071.7px;top:579.7px;width:14.5px;height:15.2px;border-radius:2px;background:#5fb8a6;color:#fff;font-size:9px;line-height:15.2px;text-align:center;-webkit-text-stroke-width:0">B</div>
<div class="a" style="left:558.4px;top:600.4px;width:622.1px;height:26.0px;background:#e0f1f7"></div>
<div class="a" style="left:565.4px;top:608.0px;width:110px;white-space:normal;font-size:9px;line-height:13px;color:#3b414c;">第三季度产品中心KPI考核</div>
<div class="a" style="left:681.2px;top:608.0px;white-space:nowrap;font-size:9px;line-height:13px;color:#5a8de6;">沈拖马</div>
<div class="a" style="left:743.4px;top:608.0px;white-space:nowrap;font-size:9px;line-height:13px;color:#5a8de6;">生产部</div>
<div class="a" style="left:804.4px;top:608.0px;white-space:nowrap;font-size:9px;line-height:13px;color:#3b414c;">生产助理</div>
<div class="a nw" style="left:716.9px;width:200px;text-align:right;top:608.0px;font-size:9px;line-height:13px;color:#3b414c;">80.6</div>
<div class="a" style="left:930.9px;top:608.0px;white-space:nowrap;font-size:9px;line-height:13px;color:#3b414c;">81.8</div>
<div class="a nw" style="left:857.4px;width:200px;text-align:right;top:608.0px;font-size:9px;line-height:13px;color:#3b414c;">81.8</div>
<div class="a" style="left:1071.7px;top:605.6px;width:14.5px;height:15.2px;border-radius:2px;background:#5fb8a6;color:#fff;font-size:9px;line-height:15.2px;text-align:center;-webkit-text-stroke-width:0">B</div>
<div class="a" style="left:558.4px;top:626.4px;width:622.1px;height:36.1px;background:#f9fcfd"></div>
<div class="a" style="left:565.4px;top:633.0px;width:110px;white-space:normal;font-size:9px;line-height:13px;color:#3b414c;">第三季度销售部门绩效考<br>核</div>
<div class="a" style="left:681.2px;top:633.0px;white-space:nowrap;font-size:9px;line-height:13px;color:#5a8de6;">单一平</div>
<div class="a" style="left:743.4px;top:633.0px;white-space:nowrap;font-size:9px;line-height:13px;color:#5a8de6;">生产部</div>
<div class="a" style="left:804.4px;top:633.0px;white-space:nowrap;font-size:9px;line-height:13px;color:#3b414c;">客户经理</div>
<div class="a nw" style="left:716.9px;width:200px;text-align:right;top:633.0px;font-size:9px;line-height:13px;color:#3b414c;">90.2</div>
<div class="a" style="left:930.9px;top:633.0px;white-space:nowrap;font-size:9px;line-height:13px;color:#3b414c;">90.5</div>
<div class="a nw" style="left:857.4px;width:200px;text-align:right;top:633.0px;font-size:9px;line-height:13px;color:#3b414c;">90.5</div>
<div class="a" style="left:1071.7px;top:631.6px;width:14.5px;height:15.2px;border-radius:2px;background:#4aa8c8;color:#fff;font-size:9px;line-height:15.2px;text-align:center;-webkit-text-stroke-width:0">A</div>
<div class="a" style="left:558.4px;top:662.5px;width:622.1px;height:36.0px;background:#e0f1f7"></div>
<div class="a" style="left:565.4px;top:669.0px;width:110px;white-space:normal;font-size:9px;line-height:13px;color:#3b414c;">第三季度销售部门绩效考<br>核</div>
<div class="a" style="left:681.2px;top:669.0px;white-space:nowrap;font-size:9px;line-height:13px;color:#5a8de6;">卢薇薇</div>
<div class="a" style="left:743.4px;top:669.0px;white-space:nowrap;font-size:9px;line-height:13px;color:#5a8de6;">生产部</div>
<div class="a" style="left:804.4px;top:669.0px;white-space:nowrap;font-size:9px;line-height:13px;color:#3b414c;">客户经理</div>
<div class="a nw" style="left:716.9px;width:200px;text-align:right;top:669.0px;font-size:9px;line-height:13px;color:#3b414c;">89.8</div>
<div class="a" style="left:930.9px;top:669.0px;white-space:nowrap;font-size:9px;line-height:13px;color:#3b414c;">85.6</div>
<div class="a nw" style="left:857.4px;width:200px;text-align:right;top:669.0px;font-size:9px;line-height:13px;color:#3b414c;">85.6</div>
<div class="a" style="left:1071.7px;top:667.7px;width:20px;height:15.2px;border-radius:2px;background:#6cb87a;color:#fff;font-size:9px;line-height:15.2px;text-align:center;-webkit-text-stroke-width:0">B+</div>
<div class="a" style="left:558.4px;top:698.5px;width:622.1px;height:36.0px;background:#f9fcfd"></div>
<div class="a" style="left:565.4px;top:705.0px;width:110px;white-space:normal;font-size:9px;line-height:13px;color:#3b414c;">第三季度销售部门绩效考<br>核</div>
<div class="a" style="left:681.2px;top:705.0px;white-space:nowrap;font-size:9px;line-height:13px;color:#5a8de6;">张滨</div>
<div class="a" style="left:743.4px;top:705.0px;white-space:nowrap;font-size:9px;line-height:13px;color:#5a8de6;">生产部</div>
<div class="a" style="left:804.4px;top:705.0px;white-space:nowrap;font-size:9px;line-height:13px;color:#3b414c;">客户经理</div>
<div class="a nw" style="left:716.9px;width:200px;text-align:right;top:705.0px;font-size:9px;line-height:13px;color:#3b414c;">86</div>
<div class="a" style="left:930.9px;top:705.0px;white-space:nowrap;font-size:9px;line-height:13px;color:#3b414c;">80</div>
<div class="a nw" style="left:857.4px;width:200px;text-align:right;top:705.0px;font-size:9px;line-height:13px;color:#3b414c;">80</div>
<div class="a" style="left:1071.7px;top:703.7px;width:14.5px;height:15.2px;border-radius:2px;background:#5fb8a6;color:#fff;font-size:9px;line-height:15.2px;text-align:center;-webkit-text-stroke-width:0">B</div>
<div class="a" style="left:558.4px;top:734.5px;width:622.1px;height:3.9px;background:#e0f1f7"></div>
<div class="a" style="left:558.4px;top:574.0px;width:622.1px;height:1px;background:#c6e4ee"></div>
<div class="a" style="left:558.4px;top:599.9px;width:622.1px;height:1px;background:#c6e4ee"></div>
<div class="a" style="left:558.4px;top:625.9px;width:622.1px;height:1px;background:#c6e4ee"></div>
<div class="a" style="left:558.4px;top:662.0px;width:622.1px;height:1px;background:#c6e4ee"></div>
<div class="a" style="left:558.4px;top:698.0px;width:622.1px;height:1px;background:#c6e4ee"></div>
<div class="a" style="left:558.4px;top:734.0px;width:622.1px;height:1px;background:#c6e4ee"></div>
<div class="a" style="left:672.7px;top:574.5px;width:1px;height:163.9px;background:#c6e4ee"></div>
<div class="a" style="left:734.9px;top:574.5px;width:1px;height:163.9px;background:#c6e4ee"></div>
<div class="a" style="left:795.9px;top:574.5px;width:1px;height:163.9px;background:#c6e4ee"></div>
<div class="a" style="left:857.8px;top:574.5px;width:1px;height:163.9px;background:#c6e4ee"></div>
<div class="a" style="left:923.4px;top:574.5px;width:1px;height:163.9px;background:#c6e4ee"></div>
<div class="a" style="left:999.1px;top:574.5px;width:1px;height:163.9px;background:#c6e4ee"></div>
<div class="a" style="left:1063.9px;top:574.5px;width:1px;height:163.9px;background:#c6e4ee"></div>
<div class="a" style="left:1128.3px;top:574.5px;width:1px;height:163.9px;background:#c6e4ee"></div>
<div class="a" style="left:558.0px;top:738.1px;width:629.5px;height:1px;background:#c9e6ef"></div>
<div class="btn" style="left:565.3px;top:743.8px;width:19.5px;height:19.3px"></div>
<svg class="a" style="left:570px;top:748.4px" width="10" height="10" viewBox="0 0 10 10"><rect x="1.2" y="1.2" width="7.6" height="7.6" rx="1.4" stroke="#4a5061" stroke-width="1" fill="none"/><path d="M5 2.6v4.8M3.6 3.8L5 2.6l1.4 1.2M3.6 6.2L5 7.4l1.4-1.2" stroke="#4a5061" stroke-width=".8" fill="none"/></svg>
<div class="btn" style="left:588.5px;top:743.8px;width:65px;height:19.3px"></div>
<div class="a" style="left:594.5px;top:747.1px;white-space:nowrap;font-size:9px;line-height:13px;color:#3b414c;">20 条/页</div>
<svg class="a" style="left:639px;top:750.8px" width="8" height="6" viewBox="0 0 8 6"><path d="M.8 1.2L4 4.4 7.2 1.2" stroke="#4a5061" stroke-width="1" fill="none"/></svg>
<div class="a" style="left:662.0px;top:747.1px;white-space:nowrap;font-size:9px;line-height:13px;color:#3b414c;">共11条</div>
<div class="btn" style="left:1094px;top:743.0px;width:21.7px;height:21px"></div>
<div class="a" style="left:1105.0px;top:747.1px;white-space:nowrap;font-size:9px;line-height:13px;color:#3b414c;transform:translateX(-2.5px)">1</div>
<div class="a" style="left:1118.0px;top:747.1px;white-space:nowrap;font-size:9px;line-height:13px;color:#3b414c;">/ 1</div>
<div class="btn" style="left:1135.8px;top:743.0px;width:21px;height:21px"></div>
<div class="btn" style="left:1159.2px;top:743.0px;width:21px;height:21px"></div>
<svg class="a" style="left:1142px;top:748.8px" width="9" height="9" viewBox="0 0 9 9"><path d="M5.8 1.2L2.8 4.5l3 3.3" stroke="#3b414c" stroke-width="1" fill="none"/></svg>
<svg class="a" style="left:1165.5px;top:748.8px" width="9" height="9" viewBox="0 0 9 9"><path d="M3.2 1.2l3 3.3-3 3.3" stroke="#3b414c" stroke-width="1" fill="none"/></svg>
</div></body></html>
